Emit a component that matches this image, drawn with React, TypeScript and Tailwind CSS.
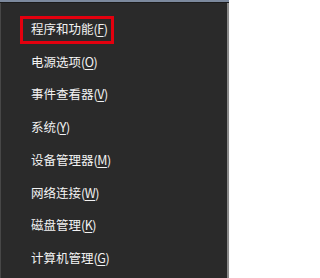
import React from "react";

const items: [string, string][] = [
  ["程序和功能", "F"],
  ["电源选项", "O"],
  ["事件查看器", "V"],
  ["系统", "Y"],
  ["设备管理器", "M"],
  ["网络连接", "W"],
  ["磁盘管理", "K"],
  ["计算机管理", "G"],
];

export default function App() {
  return (
    <div
      className="relative w-[229px] h-[278px] bg-[#2a2a2a] flex flex-col overflow-hidden"
      style={{ fontFamily: '"Noto Sans CJK SC", sans-serif' }}
    >
      <div className="h-[2px] bg-[#7c899d] shrink-0" />
      <div className="h-px bg-[#1b1b1b] shrink-0" />
      <div className="flex-1 flex border-l border-l-[#474747] border-r-2 border-r-[#8a8a8a]">
        <div className="flex flex-col pt-[10px] w-full">
          {items.map(([label, key]) => (
            <div
              key={key}
              className="h-[32.7px] flex items-center pl-[30px] text-[12.5px] text-[#f2f2f2] leading-none"
            >
              <span>{label}</span>
              <span className="tracking-[-0.5px]">
                (<span className="underline underline-offset-2">{key}</span>)
              </span>
            </div>
          ))}
        </div>
      </div>
      <div className="absolute left-[20px] top-[16px] w-[94px] h-[28px] border-[3px] border-[#e3000e]" />
    </div>
  );
}
